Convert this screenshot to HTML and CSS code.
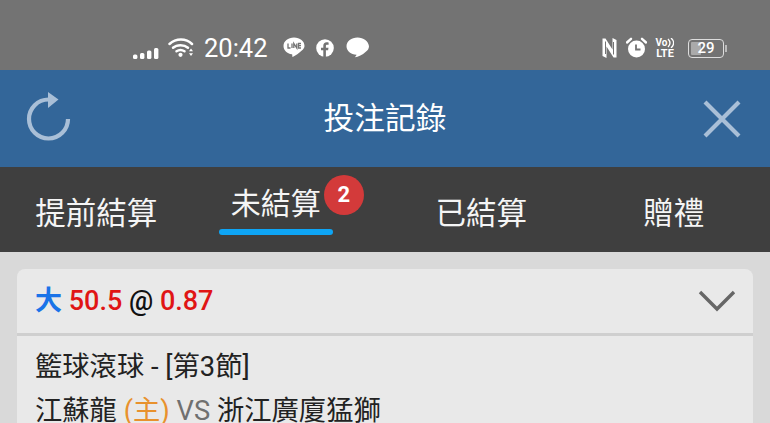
FILE: index.html
```html
<!DOCTYPE html>
<html lang="zh-Hant">
<head>
  <meta charset="UTF-8">
  <title>投注記錄</title>
  <link rel="stylesheet" href="styles.css">
</head>
<body>

<div class="statusbar">
  <div class="status-left">
    <svg class="ic-signal" width="26" height="12" viewBox="0 0 26 12"><g fill="#fff"><rect x="0" y="7.500" width="4.400" height="4.500" rx="1.500"/><rect x="7" y="6" width="4.400" height="6" rx="1.500"/><rect x="14" y="3.500" width="4.400" height="8.500" rx="1.500"/><rect x="21" y="1" width="4.400" height="11" rx="1.500"/></g></svg>
    <svg class="ic-wifi" width="26" height="20" viewBox="0 0 26 20"><g fill="none" stroke="#fff" stroke-width="2.500" stroke-linecap="round"><path d="M1.500 7C8 1 18 1 24 7"/><path d="M5 10.800C9 7.300 16 7.300 20 10.800"/><path d="M8.500 14.300C11 12.600 14 12.600 16.500 14.300"/></g><circle cx="12.500" cy="17.800" r="2.100" fill="#fff"/><path d="M23 11.500l2 2.800h-4zM23 19l2-2.800h-4z" fill="#fff"/></svg>
    <span class="clock">20:42</span>
    <svg class="ic-line" width="22" height="21" viewBox="0 0 22 21"><path d="M11 0.500C5 0.500 0.500 4.200 0.500 8.900c0 4.200 3.500 7.600 8.300 8.300.8.200.5 1.200.4 2-.1.800.6.800 1.300.400 2-1.100 5.500-3.300 8-5.800 1.800-1.700 3-3 3-4.900C21.500 4.200 17 .500 11 .500z" fill="#fff"/><g fill="none" stroke="#737373" stroke-width="1.300"><path d="M5 6.500v4.500h2.500"/><path d="M9 6.500v4.500"/><path d="M10.800 11V6.500l3 4.500V6.500"/><path d="M18 6.500h-2.500V11H18M15.500 8.700H18"/></g></svg>
    <svg class="ic-fb" width="18" height="18" viewBox="0 0 18 18"><circle cx="9" cy="9" r="8.800" fill="#fff"/><path d="M9.900 18v-6.700h2.200l.4-2.600H9.900V7.100c0-.8.300-1.300 1.400-1.300h1.300V3.500c-.6-.1-1.300-.2-2-.2-2 0-3.300 1.200-3.300 3.400v2H5v2.600h2.300V18z" fill="#737373"/></svg>
    <svg class="ic-chat" width="23" height="21" viewBox="0 0 23 21"><path d="M11.500.500C5.400.500.500 4.400.500 9.200c0 4.600 4.500 8.300 10 8.600-.2.900-1 1.800-1.800 2.500 3.600-.3 8-2.500 10.800-5.200 2.300-1.700 3.500-3.700 3.500-5.900C22.500 4.400 17.600.500 11.500.500z" fill="#fff"/></svg>
  </div>
  <div class="status-right">
    <svg class="ic-nfc" width="15" height="22" viewBox="0 0 15 22"><path d="M0.500 1.500H3.500L10.500 12.500V1L14.500 3V20.500H11.500L4.500 9.500V21L0.500 19z" fill="#fff"/><path d="M3.500 4.500V17M11.500 5V17.500" stroke="#737373" stroke-width="1"/></svg>
    <svg class="ic-alarm" width="21" height="21" viewBox="0 0 21 21"><circle cx="10.500" cy="12" r="8.500" fill="#fff"/><path d="M1 5.500L5 1.800M20 5.500L16 1.800" stroke="#fff" stroke-width="2.400" stroke-linecap="round"/><path d="M10 7.500V12.500H14.500" fill="none" stroke="#737373" stroke-width="1.800"/></svg>
    <div class="volte">
      <span class="volte-top">Vo<svg width="7" height="10" viewBox="0 0 7 10"><path d="M1 1c2.500 2.500 2.500 5.500 0 8M4 0c3.500 3 3.500 7 0 10" fill="none" stroke="#fff" stroke-width="1.300"/></svg></span>
      <span class="volte-bottom">LTE</span>
    </div>
    <div class="battery">
      <div class="battery-body">
        <div class="battery-fill"></div>
        <span class="battery-num">29</span>
      </div>
      <div class="battery-cap"></div>
    </div>
  </div>
</div>

<div class="header">
  <svg class="ic-refresh" width="50" height="54" viewBox="0 0 50 54"><path d="M24.500 9.500a19.500 19.500 0 1 0 19.500 19.500" fill="none" stroke="#a9bfd7" stroke-width="4.200"/><path d="M24 2l10.500 7.500L24 18z" fill="#a9bfd7"/></svg>
  <h1>投注記錄</h1>
  <svg class="ic-close" width="40" height="40" viewBox="0 0 40 40"><path d="M3 3L37 37M37 3L3 37" stroke="#a9bfd7" stroke-width="4.200"/></svg>
</div>

<div class="tabs">
  <div class="tab">提前結算</div>
  <div class="tab tab-active">
    <div class="tab-label">未結算<span class="badge">2</span></div>
    <div class="tab-line"></div>
  </div>
  <div class="tab">已結算</div>
  <div class="tab">贈禮</div>
</div>

<div class="content">
  <div class="card">
    <div class="card-head">
      <div class="bet">
        <span class="blue">大</span> <span class="red">50.5</span> <span class="at">@</span> <span class="red">0.87</span>
      </div>
      <svg width="38" height="24" viewBox="0 0 38 24"><path d="M2 3L19 20L36 3" fill="none" stroke="#666" stroke-width="3.400"/></svg>
    </div>
    <div class="card-body">
      <div class="line">籃球滾球 - [第3節]</div>
      <div class="line">江蘇龍 <span class="orange">(主)</span> <span class="vs">VS</span> 浙江廣廈猛獅</div>
    </div>
  </div>
</div>

</body>
</html>
```

FILE: styles.css
```css
* {
  box-sizing: border-box;
}

html, body {
  height: 100%;
}

body {
  margin: 0;
  overflow: hidden;
  background: #d9d9d9;
  font-family: Roboto, "Noto Sans CJK TC", sans-serif;
  display: flex;
  flex-direction: column;
}

svg {
  display: block;
  flex: none;
}

.statusbar {
  height: 70px;
  flex: none;
  background: #737373;
  color: #fff;
  display: flex;
  justify-content: space-between;
  align-items: center;
  padding: 26px 43px 0 133px;
}

.status-left,
.status-right {
  display: flex;
  align-items: center;
}

.ic-signal {
  margin-top: 9px;
  margin-right: 9px;
}

.ic-wifi {
  margin-right: 10px;
  margin-top: -2px;
}

.clock {
  font-size: 25.500px;
  line-height: 30px;
  margin-right: 15px;
}

.ic-line {
  margin-right: 11px;
  margin-top: -1px;
}

.ic-fb {
  margin-right: 12px;
  margin-top: -1px;
}

.ic-chat {
  margin-top: -2px;
}

.ic-nfc {
  margin-right: 9px;
}

.ic-alarm {
  margin-right: 8px;
  margin-top: -1px;
}

.volte {
  display: flex;
  flex-direction: column;
  align-items: center;
  font-weight: 700;
  width: 20px;
  margin-right: 13px;
}

.volte-top {
  font-size: 10px;
  line-height: 10px;
  display: flex;
  align-items: center;
}

.volte-bottom {
  font-size: 11px;
  line-height: 11px;
}

.battery {
  display: flex;
  align-items: center;
}

.battery-body {
  width: 36px;
  height: 19px;
  border: 1.500px solid #ddd;
  border-radius: 4px;
  padding: 2px;
  position: relative;
}

.battery-fill {
  width: 10px;
  height: 100%;
  background: #aaa;
  border-radius: 1px;
}

.battery-num {
  position: absolute;
  left: 0;
  right: 0;
  top: -1px;
  text-align: center;
  font-size: 15px;
  line-height: 19px;
  font-weight: 500;
}

.battery-cap {
  width: 2px;
  height: 7px;
  background: #bbb;
  margin-left: 1px;
}

.header {
  height: 97px;
  flex: none;
  background: #336699;
  display: grid;
  grid-template-columns: 1fr auto 1fr;
  align-items: center;
  padding: 0 28px;
}

.header h1 {
  margin: 0;
  color: #fff;
  font-size: 30.700px;
  font-weight: 400;
  line-height: 40px;
}

.ic-refresh {
  margin-top: -4px;
  margin-left: -4px;
}

.ic-close {
  justify-self: end;
}

.tabs {
  height: 85px;
  flex: none;
  background: #3f3f3f;
  display: grid;
  grid-template-columns: repeat(4, 1fr);
  color: #f5f5f5;
  font-size: 30.500px;
}

.tab {
  display: flex;
  justify-content: center;
  align-items: center;
  padding-top: 2px;
}

.tab-active {
  flex-direction: column;
  align-items: center;
  justify-content: flex-start;
  padding: 16px 26px 0 0;
}

.tab-label {
  position: relative;
  width: 114px;
  line-height: 42px;
  text-align: center;
  font-size: 30px;
}

.tab-line {
  width: 114px;
  height: 6px;
  margin-top: 4px;
  background: #0ea5f5;
  border-radius: 3px;
}

.badge {
  position: absolute;
  left: 105px;
  top: -8px;
  width: 40px;
  height: 40px;
  border-radius: 50%;
  background: #d33a3a;
  color: #fff;
  font-size: 22px;
  font-weight: 700;
  line-height: 40px;
  text-align: center;
}

.content {
  padding: 17px 17px 0;
}

.card {
  background: #e9e9e9;
  border-radius: 8px 8px 0 0;
}

.card-head {
  height: 67px;
  border-bottom: 3px solid #cfcfcf;
  display: flex;
  justify-content: space-between;
  align-items: center;
  padding: 0 17px 0 18px;
}

.bet {
  font-size: 27px;
  font-weight: 500;
  line-height: 40px;
  color: #111;
}

.blue {
  color: #1a73e8;
  font-weight: 700;
}

.red {
  color: #e01515;
}

.card-body {
  padding: 9px 18px;
  color: #222;
  font-size: 27.300px;
}

.line {
  line-height: 44px;
}

.orange {
  color: #e8912d;
}

.vs {
  color: #707070;
}
```
